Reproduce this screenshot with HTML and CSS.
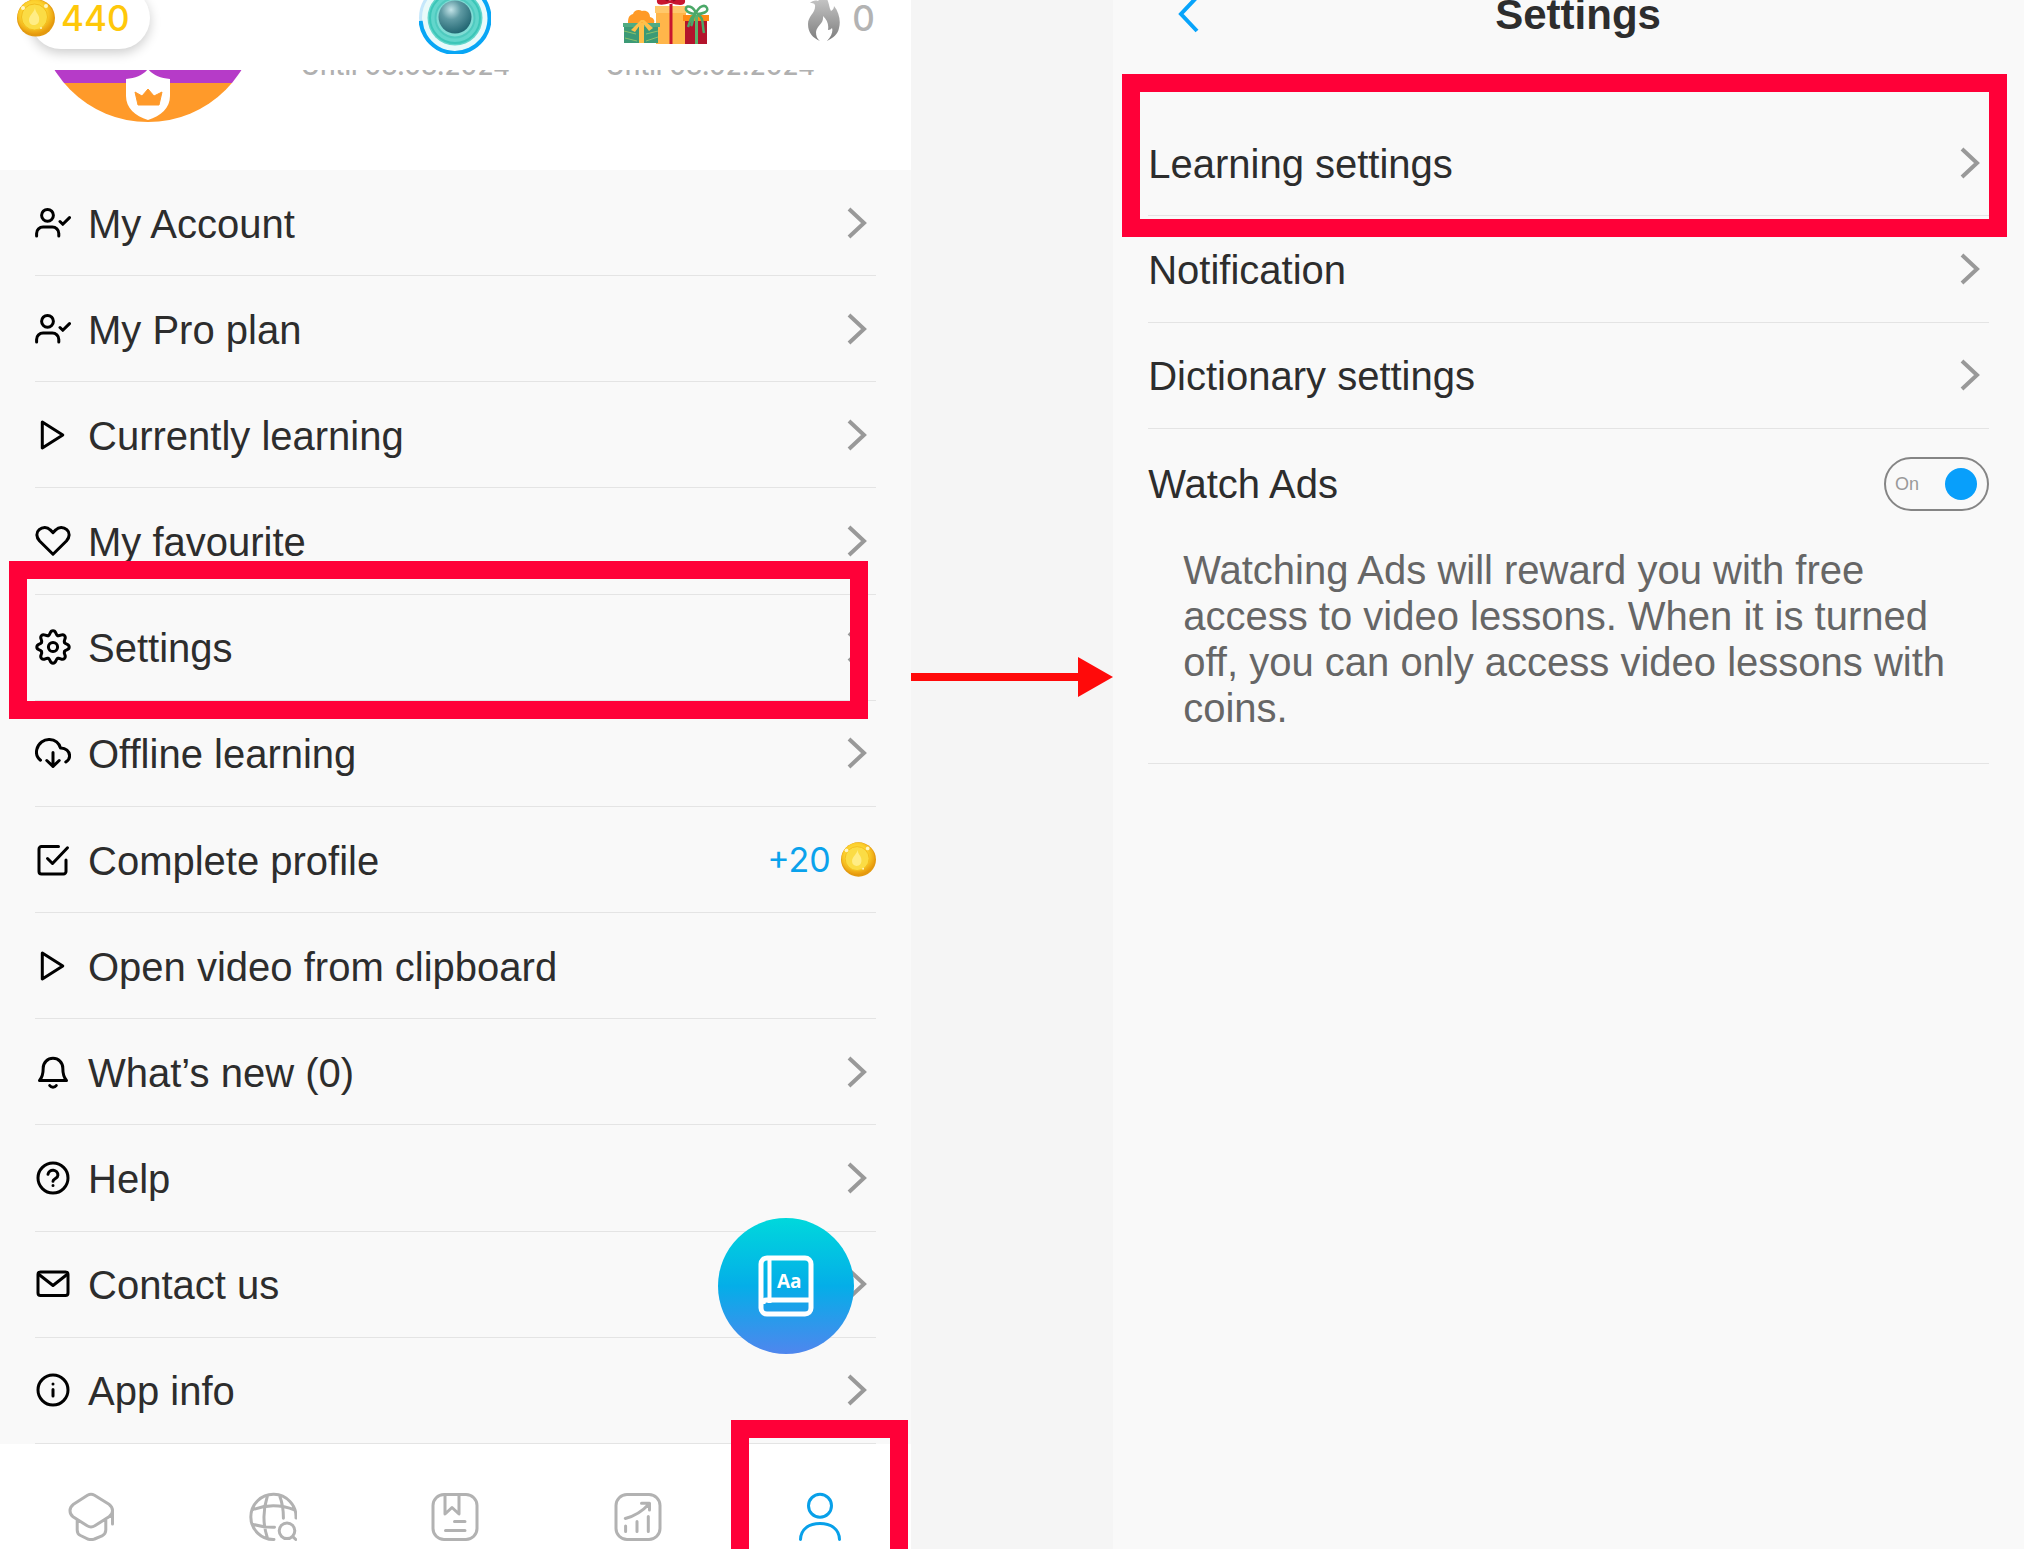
FILE: index.html
```html
<!DOCTYPE html>
<html lang="en">
<head>
<meta charset="utf-8">
<meta name="viewport" content="width=device-width, initial-scale=1">
<title>Settings</title>
<link rel="stylesheet" href="styles.css">
</head>
<body>
<svg class="defs" aria-hidden="true">
  <defs>
    <radialGradient id="gold" cx="45%" cy="40%" r="60%">
      <stop offset="0" stop-color="#ffe95e"/><stop offset=".6" stop-color="#fcd02c"/><stop offset="1" stop-color="#e89a0c"/>
    </radialGradient>
    <radialGradient id="pearl" cx="38%" cy="28%" r="75%">
      <stop offset="0" stop-color="#c4e4e8"/><stop offset=".4" stop-color="#5f9aa3"/><stop offset="1" stop-color="#1f6470"/>
    </radialGradient>
    <linearGradient id="ash" x1="0" y1="0" x2="0" y2="1">
      <stop offset="0" stop-color="#cfcfcf"/><stop offset="1" stop-color="#7d7d7d"/>
    </linearGradient>
    <symbol id="coin" viewBox="0 0 38 38">
      <ellipse cx="19" cy="19" rx="19" ry="18.6" fill="#e39a10"/>
      <ellipse cx="18.6" cy="18" rx="18" ry="17.4" fill="url(#gold)"/>
      <ellipse cx="17.5" cy="18" rx="13" ry="13" fill="#fbdc45" stroke="#f3bd1c"/>
      <path d="M18 8c0 5-6 8-6 13 0 3 2 5 5 5s6-2 5-8c-1-4-4-5-4-10z" fill="#ffed86"/>
      <circle cx="6" cy="9" r="2" fill="#fff6c4"/><circle cx="29" cy="7" r="2" fill="#fff6c4"/><circle cx="24" cy="29" r="1" fill="#fff6c4"/>
    </symbol>
    <symbol id="chevron" viewBox="0 0 20 32"><path d="M2 2 17 16 2 30" fill="none" stroke="#999" stroke-width="4"/></symbol>
    <symbol id="user-check" viewBox="0 0 36 36"><circle cx="12.5" cy="10.3" r="5.9"/><path d="M1.6 31v-2.5a6.5 6.500 0 0 1 6.500-6.500h9.200a6.500 6.500 0 0 1 6.500 6.500V31M25 16.500l2.800 2.800 6.700-6.700"/></symbol>
    <symbol id="play" viewBox="0 0 36 36"><path d="M7.300 5 27.800 18 7.300 31z"/></symbol>
    <symbol id="heart" viewBox="0 0 36 36"><path d="M18 31.200 4.600 18C1 14 1 9.500 4.200 6.700 7.600 3.600 12.400 4 15 6.700l3 2.900 3-2.900c2.600-2.700 7.400-3.100 10.800 0C35 9.500 35 14 31.400 18z"/></symbol>
    <symbol id="gear" viewBox="0 0 36 36">
      <g transform="translate(18 18)">
        <path id="tooth" d="M-4.700-11.400C-2.200-12.500-3.600-16.200 0-16.200S2.200-12.500 4.700-11.400"/>
        <use href="#tooth" transform="rotate(45)"/><use href="#tooth" transform="rotate(90)"/><use href="#tooth" transform="rotate(135)"/><use href="#tooth" transform="rotate(180)"/><use href="#tooth" transform="rotate(225)"/><use href="#tooth" transform="rotate(270)"/><use href="#tooth" transform="rotate(315)"/>
        <circle r="4.600"/>
      </g>
    </symbol>
    <symbol id="cloud" viewBox="0 0 36 36"><path d="M5.500 25.200C2 22.500 1 18 1.800 14.500 3.200 8 9 4.200 14.500 4.500 20 4.800 24 8 25.500 13c5.100-.2 9.100 3.300 9.100 8 0 2.500-1.600 4.600-3.800 6M18 17.500v14M11.800 25.500l6.200 5.900 6.200-5.900"/></symbol>
    <symbol id="check-square" viewBox="0 0 36 36"><path d="M23.500 4.500H6.500a2.500 2.500 0 0 0-2.500 2.500V29.500a2.500 2.500 0 0 0 2.500 2.500h22a2.500 2.500 0 0 0 2.500-2.500V18M12.500 16.500l5 5L32.500 5.800"/></symbol>
    <symbol id="bell" viewBox="0 0 36 36"><path d="M4.500 26.500h27c-2.200-2.500-3.700-5-3.700-12.500a9.800 9.800 0 0 0-19.600 0c0 7.500-1.500 10-3.700 12.500zM14.700 31.500a4 4 0 0 0 6.600 0"/></symbol>
    <symbol id="help" viewBox="0 0 36 36"><circle cx="18" cy="18" r="15"/><path d="M13 14.200a5 5 0 0 1 9.900 1c0 3.400-4.900 3.600-4.900 6M18 25.500v.1"/></symbol>
    <symbol id="mail" viewBox="0 0 36 36"><rect x="3" y="6" width="30" height="23.500" rx="2.500"/><path d="M4 8.500 18 19.500 32 8.500"/></symbol>
    <symbol id="info" viewBox="0 0 36 36"><circle cx="18" cy="18" r="15"/><path d="M18 12v.1M18 17.500V24"/></symbol>
  </defs>
</svg>

<main class="board">
  <section class="phone" aria-label="Profile">
    <header class="status">
      <div class="status-bar">
        <div class="status-left">
          <div class="coins"><svg class="coins-icon"><use href="#coin"/></svg><span>440</span></div>
        </div>
        <svg class="orb" viewBox="0 0 72 72">
          <circle cx="36" cy="36" r="34.500" fill="#e9fafa" stroke="#c5e7fb" stroke-width="3"/>
          <circle cx="36" cy="36" r="27.500" fill="#62d6cb"/>
          <circle cx="36" cy="36" r="25" fill="none" stroke="#3cc6b8" stroke-width="2"/>
          <circle cx="36" cy="36" r="19.500" fill="#7fdcd4" stroke="#4fcabf" stroke-width="2"/>
          <circle cx="36" cy="35" r="16.500" fill="url(#pearl)"/>
          <path d="M1.600 39A34.500 34.500 0 1 0 60 11.600" fill="none" stroke="#08a6f5" stroke-width="4"/>
        </svg>
        <div class="status-right">
          <svg class="gifts" viewBox="0 0 88 64">
            <path d="M34 25h30v37H34z" fill="#ffb64a"/><path d="M33 24h32v7H33z" fill="#ffc86b"/>
            <path d="M47.500 22h3v40h-3z" fill="#c8152f"/>
            <path d="M48 21c-9 3-14 2-13-3s9-8 13 1c4-9 14-7 15-1s-5 6-15 3z" fill="#c8152f"/><path d="M46 19c-2-2-4-3-7-2M51 19c2-2 4-3 7-2" stroke="#8f0c22" stroke-width="2" fill="none"/>
            <path d="M2 42h34v19H2z" fill="#3c9a76"/><path d="M1 41h37v4H1z" fill="#50ab83"/>
            <path d="m2 49 12 3M3 56l12 3M24 52l12-3M24 59l12-4" stroke="#8ac26a" fill="none"/>
            <path d="M17 41h5v20h-5z" fill="#ffc04a"/>
            <path d="M6 41c0-5 1-8 5-9 1-4 6-5 9-3 5-1 8 2 8 6 4 1 5 4 4 6z" fill="#ff9a26"/><path d="m19 38-10 10 4 2 7-10 7 9 4-3-9-8z" fill="#ffc04a"/>
            <path d="M63 38h22v24H63z" fill="#b3142c"/><path d="M61 33h26v6H61z" fill="#ff8a14"/>
            <path d="M73 33h3v29h-3z" fill="#5cb36c"/>
            <path d="M74 32c-6 0-11-3-10-6s7-2 10 5c3-7 9-9 11-5s-5 6-10 6M73 33c-5 2-5 7-7 12M76 33c6 2 4 10 6 18M72 34c-2 5-1 7-3 10" stroke="#4ba868" stroke-width="2.500" fill="none"/>
          </svg>
          <div class="streak">
            <svg class="flame" viewBox="0 0 32 50"><path d="M13 2c9 5 7 13 10 18 2-1 3-3 3-5 5 6 7 15 5 22-1 6-6 10-12 13 5-5 6-10 5-13-1 1-2 2-4 2 1-6-1-10-5-14 1 8-6 9-7 16 0 4 1 7 4 9C5 47 0 42 0 33c0-8 8-11 7-19-1-2-3-2-5-2 2-2 5-3 8-2 2-2 4-5 3-8z" fill="url(#ash)"/></svg>
            <span>0</span>
          </div>
        </div>
      </div>
    </header>

    <div class="profile">
      <svg class="badge" viewBox="0 0 220 220">
        <clipPath id="disc"><circle cx="110" cy="110" r="110"/></clipPath>
        <g clip-path="url(#disc)"><path d="M0 0h220v181H0z" fill="#b63bc8"/><path d="M0 181h220v39H0z" fill="#ff9a2a"/></g>
        <path d="M110 167c-5 6-12 9-22 10v17c0 12 9 20 22 24 13-4 22-12 22-24v-17c-10-1-17-4-22-10z" fill="#fff"/>
        <path d="m97 190 7 4 6-7 6 7 8-4-3 13h-21z" fill="#ff9a2a" stroke="#ff9a2a"/>
      </svg>
      <p class="until">Until 03.03.2024</p>
      <p class="until">Until 03.02.2024</p>
    </div>

    <ul class="menu">
      <li class="item"><a class="row" href="#account"><svg class="icon"><use href="#user-check"/></svg><span class="label">My Account</span><svg class="chevron"><use href="#chevron"/></svg></a></li>
      <li class="item"><a class="row" href="#plan"><svg class="icon"><use href="#user-check"/></svg><span class="label">My Pro plan</span><svg class="chevron"><use href="#chevron"/></svg></a></li>
      <li class="item"><a class="row" href="#learning"><svg class="icon"><use href="#play"/></svg><span class="label">Currently learning</span><svg class="chevron"><use href="#chevron"/></svg></a></li>
      <li class="item"><a class="row" href="#favourite"><svg class="icon"><use href="#heart"/></svg><span class="label">My favourite</span><svg class="chevron"><use href="#chevron"/></svg></a></li>
      <li class="item"><a class="row" href="#settings"><svg class="icon"><use href="#gear"/></svg><span class="label">Settings</span><svg class="chevron"><use href="#chevron"/></svg></a><span class="mark mark-settings"></span></li>
      <li class="item"><a class="row" href="#offline"><svg class="icon"><use href="#cloud"/></svg><span class="label">Offline learning</span><svg class="chevron"><use href="#chevron"/></svg></a></li>
      <li class="item"><a class="row" href="#profile"><svg class="icon"><use href="#check-square"/></svg><span class="label">Complete profile</span><span class="bonus">+20<svg class="bonus-coin"><use href="#coin"/></svg></span></a></li>
      <li class="item"><a class="row" href="#clipboard"><svg class="icon"><use href="#play"/></svg><span class="label">Open video from clipboard</span></a></li>
      <li class="item"><a class="row" href="#news"><svg class="icon"><use href="#bell"/></svg><span class="label">What’s new (0)</span><svg class="chevron"><use href="#chevron"/></svg></a></li>
      <li class="item"><a class="row" href="#help-page"><svg class="icon"><use href="#help"/></svg><span class="label">Help</span><svg class="chevron"><use href="#chevron"/></svg></a></li>
      <li class="item"><a class="row" href="#contact"><svg class="icon"><use href="#mail"/></svg><span class="label">Contact us</span><svg class="chevron"><use href="#chevron"/></svg></a></li>
      <li class="item"><a class="row" href="#app-info"><svg class="icon"><use href="#info"/></svg><span class="label">App info</span><svg class="chevron"><use href="#chevron"/></svg></a></li>
    </ul>

    <nav class="tabs" aria-label="Main">
      <a class="tab" href="#learn" aria-label="Learn"><svg class="tab-icon" viewBox="0 0 48 50"><path d="M20.500 3.200q3.500-2 7 0L42 12.200q3.500 2.600 3.500 6.600 0 3.700-3.500 6L27.800 33.800q-3.800 2.200-7.600 0L6 24.800q-3-2.300-3-6 0-4 3.500-6.600zM45.500 18.800V32M10.200 28v10q0 4 3.300 5.500l8 3.800q3 .7 6-.3l7.500-3.200q3.800-2 3.800-5.800V28"/></svg></a>
      <a class="tab" href="#explore" aria-label="Explore"><svg class="tab-icon" viewBox="0 0 48 50"><path d="M47 26A22.600 22.600 0 1 0 25 47.500M18.400 4Q11.500 25 18.400 46M30.700 4Q34.500 14 34.400 26.300M3 18Q24 9.500 46 18M3.500 32.200Q14 35.500 25.500 35.300M44 44.800l2.800 2.700"/><circle cx="38" cy="38.800" r="7.800"/></svg></a>
      <a class="tab" href="#saved" aria-label="Saved"><svg class="tab-icon" viewBox="0 0 48 50"><rect x="2" y="2.500" width="44" height="45" rx="11"/><path d="M14 3v19l7-6.500 7 6.500V3M23.500 29.500H34M14.500 38.500H34"/></svg></a>
      <a class="tab" href="#progress" aria-label="Progress"><svg class="tab-icon" viewBox="0 0 48 50"><rect x="2" y="2.500" width="44" height="45" rx="11"/><path d="M11.600 34v5.500M23 29.500v10M34.300 24.500v15M11.300 26.500Q25 23 35 12M27.500 11.300h8V18"/></svg></a>
      <a class="tab tab-active" href="#me" aria-label="Profile"><svg class="tab-icon" viewBox="0 0 48 50"><circle cx="24" cy="13.700" r="11.500"/><path d="M4.500 47.500C4.700 37 13 31.500 24 31.500S43.300 37 43.500 47.500"/></svg><span class="mark mark-tab"></span></a>
    </nav>

    <button class="dictionary" type="button" aria-label="Dictionary">
      <svg class="dictionary-icon" viewBox="0 0 56 62" fill="none" stroke="#fff">
        <rect x="3" y="3" width="50" height="56" rx="6" stroke-width="5"/>
        <path d="M11.500 4v44" stroke-width="4"/><path d="M5 49v-1q0-3 4-3h43" stroke-width="5"/>
        <text x="19" y="33">Aa</text>
      </svg>
    </button>
  </section>

  <div class="between">
    <svg class="arrow-head" viewBox="0 0 35 40"><path d="M0 0 35 20 0 40z" fill="#ff0a0a"/></svg>
  </div>

  <section class="phone" aria-label="Settings">
    <header class="title-bar">
      <button class="back" type="button" aria-label="Back"><svg class="back-icon" viewBox="0 0 22 40" fill="none" stroke="#08a4fb" stroke-width="4"><path d="M19 3 3 20 19 37"/></svg></button>
      <h1 class="title">Settings</h1>
    </header>
    <ul class="menu-short">
      <li class="item"><a class="row" href="#learning-settings"><span class="label">Learning settings</span><svg class="chevron"><use href="#chevron"/></svg></a><span class="mark mark-learning"></span></li>
      <li class="item"><a class="row" href="#notification"><span class="label">Notification</span><svg class="chevron"><use href="#chevron"/></svg></a></li>
      <li class="item"><a class="row" href="#dictionary-settings"><span class="label">Dictionary settings</span><svg class="chevron"><use href="#chevron"/></svg></a></li>
    </ul>
    <div class="ads">
      <div class="ads-head">
        <label for="watch-ads">Watch Ads</label>
        <span class="switch"><span>On</span><input class="knob" id="watch-ads" type="checkbox" checked></span>
      </div>
      <p class="ads-text">Watching Ads will reward you with free access to video lessons. When it is turned off, you can only access video lessons with coins.</p>
    </div>
  </section>
</main>
</body>
</html>
```
FILE: styles.css
```css
* { box-sizing: border-box; }

body {
  margin: 0;
  background: #f5f5f5;
  color: #2d2d2d;
  font-family: "Liberation Sans", Arial, sans-serif;
  font-size: 40px;
  line-height: 46px;
}

ul, p, h1 { margin: 0; padding: 0; list-style: none; }
a { color: inherit; text-decoration: none; }
button { border: 0; padding: 0; background: none; }
svg { display: block; flex: none; }
.defs { position: absolute; width: 0; height: 0; }

.board {
  display: grid;
  grid-template-columns: 9fr 2fr 9fr;
  height: 100vh;
  overflow: hidden;
}

.phone {
  position: relative;
  display: flex;
  flex-direction: column;
  min-width: 0;
  background: #f9f9f9;
}

/* Top counters */
.status {
  height: 70px;
  flex: none;
  overflow: hidden;
  background: #fff;
  font-family: Inter, sans-serif;
  font-size: 35px;
}
.status-bar {
  display: grid;
  grid-template-columns: 1fr 72px 1fr;
  grid-template-rows: 36px;
  align-items: center;
}
.status-left { display: flex; align-items: center; height: 36px; }
.coins {
  display: flex;
  align-items: center;
  gap: 6px;
  height: 62px;
  margin-left: 30px;
  padding-right: 20px;
  border-radius: 31px;
  background: #fff;
  box-shadow: 0 4px 12px rgba(0, 0, 0, .2);
  color: #ffc80a;
  font-weight: 500;
}
.coins-icon { width: 38px; height: 38px; margin-left: -13px; }
.orb { width: 72px; height: 72px; }
.status-right {
  display: flex;
  align-items: center;
  justify-content: space-between;
  height: 36px;
  padding: 0 36px 0 131px;
}
.gifts { width: 88px; height: 64px; margin-bottom: 8px; }
.streak { display: flex; align-items: center; gap: 12px; color: #b3b3b3; font-weight: 500; }
.flame { width: 32px; height: 50px; margin-bottom: 4px; }

/* Scrolled profile card */
.profile {
  display: grid;
  grid-template-columns: minmax(0, 253fr) 305fr 305fr 48fr;
  grid-template-rows: 100px;
  align-items: end;
  flex: none;
  overflow: hidden;
  background: #fff;
}
.badge { width: 220px; height: 220px; margin: 0 0 48px 38px; }
.until {
  margin-bottom: 88px;
  color: #b0b0b0;
  font-family: Inter, sans-serif;
  font-size: 26px;
  font-weight: 500;
  line-height: 32px;
  text-align: center;
}

/* Menu rows */
.menu {
  display: grid;
  grid-auto-rows: 1fr;
  min-height: 1274px;
  flex: none;
}
.item { position: relative; display: flex; padding: 0 35px; }
.row {
  display: flex;
  flex: 1;
  align-items: center;
  gap: 17px;
  border-bottom: 1px solid #e4e4e4;
}
.label { flex: 1; padding-top: 2px; }
.icon {
  width: 36px;
  height: 36px;
  fill: none;
  stroke: #000;
  stroke-width: 3;
  stroke-linecap: round;
  stroke-linejoin: round;
}
.chevron { width: 20px; height: 32px; margin-right: 9px; }
.bonus {
  display: flex;
  align-items: center;
  gap: 10px;
  color: #0aa2ec;
  font-family: Inter, sans-serif;
  font-size: 34px;
}
.bonus-coin { width: 35px; height: 35px; }

/* Red callout frames */
.mark {
  position: absolute;
  z-index: 1;
  border: 18px solid #ff0038;
  pointer-events: none;
}
.mark-settings { inset: -34px 43px -18px 9px; }
.mark-learning { inset: -36px 17px -21px 9px; }
.mark-tab { inset: -24px 3px -40px 2px; }

/* Bottom tabs */
.tabs {
  display: grid;
  grid-template-columns: repeat(5, 1fr);
  flex: 1;
  background: #fff;
}
.tab { position: relative; display: flex; justify-content: center; padding-top: 48px; color: #b2b2b2; }
.tab-active { color: #08a0e9; }
.tab-icon {
  width: 48px;
  height: 50px;
  fill: none;
  stroke: currentColor;
  stroke-width: 3;
  stroke-linecap: round;
  stroke-linejoin: round;
}

.dictionary {
  position: absolute;
  right: 57px;
  bottom: 195px;
  display: flex;
  align-items: center;
  justify-content: center;
  width: 136px;
  height: 136px;
  border-radius: 50%;
  background: linear-gradient(#00d8dc, #04aee8 50%, #4f86ee);
}
.dictionary-icon { width: 56px; height: 62px; }
.dictionary-icon text {
  fill: #fff;
  stroke: none;
  font-family: "Open Sans", sans-serif;
  font-size: 19px;
  font-weight: 700;
}

/* Arrow between the screens */
.between {
  display: flex;
  align-items: center;
  height: 40px;
  margin-top: 657px;
}
.between::before { content: ""; flex: 1; height: 8px; background: #ff0a0a; }
.arrow-head { width: 35px; height: 40px; }

/* Settings screen */
.title-bar { display: flex; align-items: flex-start; height: 110px; flex: none; padding: 0 68px 0 65px; }
.back { display: flex; align-items: center; height: 28px; }
.back-icon { width: 22px; height: 40px; }
.title { flex: 1; font-size: 42px; line-height: 30px; text-align: center; }
.menu-short { display: grid; grid-auto-rows: 1fr; min-height: 319px; flex: none; }
.ads { margin: 0 35px; padding-bottom: 32px; border-bottom: 1px solid #e4e4e4; }
.ads-head { display: flex; align-items: center; justify-content: space-between; height: 110px; }
.switch {
  display: flex;
  align-items: center;
  justify-content: space-between;
  width: 105px;
  height: 54px;
  padding: 0 10px 0 9px;
  border: 2px solid #858585;
  border-radius: 27px;
  color: #999;
  font-size: 18px;
  line-height: 24px;
}
.knob { appearance: none; width: 32px; height: 32px; margin: 0; border-radius: 50%; background: #089ffb; }
.ads-text { margin-top: 8px; padding-left: 35px; color: #666; }
```
